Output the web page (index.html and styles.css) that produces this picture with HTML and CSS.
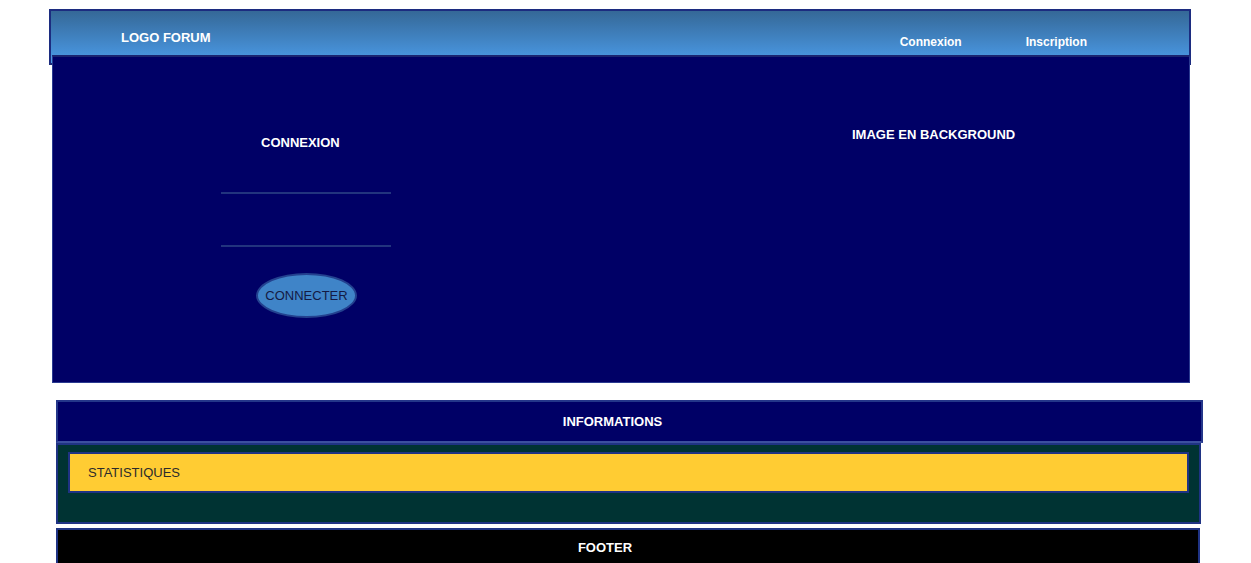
FILE: index.html
```html
<!DOCTYPE html>
<html lang="fr">
<head>
<meta charset="utf-8">
<title>Forum</title>
<link rel="stylesheet" href="styles.css">
</head>
<body>
<header class="topbar">
  <div class="logo">LOGO FORUM</div>
  <nav class="nav">
    <a href="#">Connexion</a>
    <a href="#">Inscription</a>
  </nav>
</header>
<section class="hero">
  <form class="login">
    <h2 class="login-title">CONNEXION</h2>
    <input class="field field-1" type="text">
    <input class="field field-2" type="password">
    <button class="btn" type="button">CONNECTER</button>
  </form>
  <div class="bg-label">IMAGE EN BACKGROUND</div>
</section>
<section class="info">INFORMATIONS</section>
<section class="stats">
  <div class="stats-box">STATISTIQUES</div>
</section>
<footer class="footer">FOOTER</footer>
</body>
</html>
```

FILE: styles.css
```css
* { box-sizing: border-box; }
html, body { margin: 0; padding: 0; background: #fff; }
body {
  font-family: "Liberation Sans", Arial, sans-serif;
  font-size: 13px;
  padding-top: 9px;
  overflow: hidden;
  height: 563px;
}
.topbar {
  margin-left: 49px;
  width: 1142px;
  height: 56px;
  border: 2px solid #1c2c80;
  border-bottom-color: #1a2a78;
  background: linear-gradient(#356897, #4b9be8);
  display: flex;
  align-items: flex-start;
  justify-content: space-between;
  color: #fff;
  font-weight: bold;
}
.logo {
  margin-left: 70px;
  margin-top: 19px;
  font-size: 13px;
}
.nav {
  display: flex;
  gap: 64px;
  margin-top: 24px;
  margin-right: 102px;
}
.nav a {
  color: #fff;
  text-decoration: none;
  font-size: 12px;
}
.hero {
  position: relative;
  margin-top: -10px;
  margin-left: 52px;
  width: 1138px;
  height: 328px;
  background: #000066;
  border: 1px solid #2a3a90;
  border-top: 2px solid #1a2470;
  display: flex;
  color: #fff;
}
.login {
  margin-left: 168px;
  width: 170px;
  display: flex;
  flex-direction: column;
  align-items: flex-start;
}
.login-title {
  margin: 78px 0 0 40px;
  font-size: 13px;
  font-weight: bold;
  line-height: 16px;
}
.field {
  width: 170px;
  height: 20px;
  background: transparent;
  border: none;
  border-bottom: 2px solid #22347e;
  outline: none;
  padding: 0;
}
.field-1 { margin-top: 23px; }
.field-2 { margin-top: 33px; }
.btn {
  margin: 26px 0 0 35px;
  width: 101px;
  height: 45px;
  border-radius: 50%;
  background: #3f84c8;
  border: 2px solid #23418f;
  color: #141a44;
  font-family: "Liberation Sans", Arial, sans-serif;
  font-size: 13px;
  padding: 0;
}
.bg-label {
  margin-left: 461px;
  margin-top: 70px;
  font-weight: bold;
  font-size: 13px;
  line-height: 16px;
}
.info {
  margin-top: 17px;
  margin-left: 56px;
  width: 1147px;
  height: 43px;
  background: #000066;
  border: 2px solid #24368a;
  border-bottom-color: #3b4f9e;
  color: #fff;
  font-weight: bold;
  display: flex;
  align-items: center;
  justify-content: center;
  padding-right: 34px;
}
.stats {
  margin-left: 56px;
  width: 1145px;
  height: 81px;
  background: #003333;
  border: 2px solid #1f3384;
  padding: 7px 10px 0 10px;
}
.stats-box {
  height: 41px;
  background: #ffcc33;
  border: 2px solid #1f3384;
  color: #2b2b2b;
  padding-left: 18px;
  display: flex;
  align-items: center;
}
.footer {
  margin-top: 4px;
  margin-left: 56px;
  width: 1144px;
  height: 40px;
  background: #000;
  border: 2px solid #1f3384;
  border-bottom: none;
  color: #fff;
  font-weight: bold;
  display: flex;
  align-items: flex-start;
  justify-content: center;
  padding-top: 10px;
  padding-right: 46px;
}
```
